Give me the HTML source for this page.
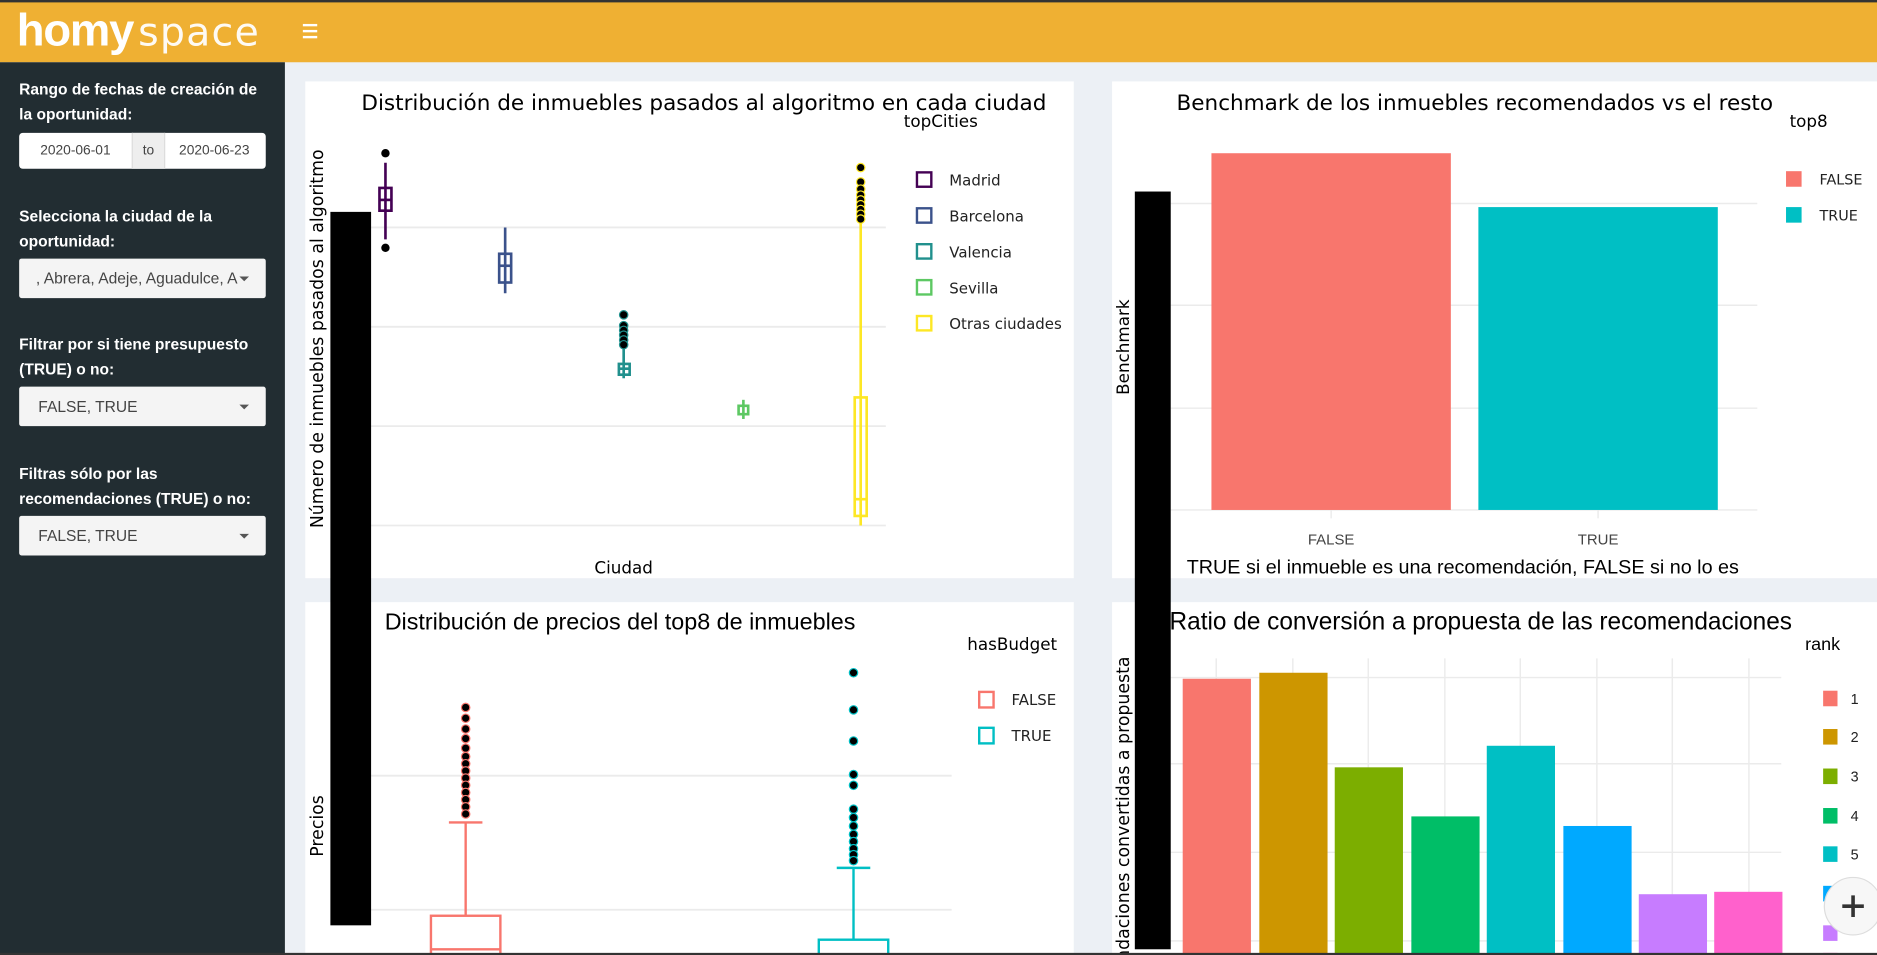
<!DOCTYPE html>
<html><head><meta charset="utf-8"><style>
html,body{margin:0;padding:0;width:1877px;height:955px;overflow:hidden;background:#ecf0f5;}
#w{position:absolute;left:0;top:0;width:1568px;height:798px;transform:scale(1.19707);transform-origin:0 0;font-family:"Liberation Sans","DejaVu Sans",sans-serif;}
#hd{position:absolute;left:0;top:0;width:1568px;height:52px;background:#efb033;border-top:2px solid #333;box-sizing:border-box;}
#logo{position:absolute;left:14px;top:4px;color:#fff;font-size:38px;line-height:40px;white-space:nowrap}
#logo b{font-weight:bold;letter-spacing:-1px}
#logo span{font-weight:normal;font-family:"DejaVu Sans","Liberation Sans",sans-serif;font-size:33px;letter-spacing:1px;margin-left:4px;-webkit-text-stroke:0;opacity:.95}
#ham{position:absolute;left:253px;top:18px;width:12px;}
#ham i{display:block;height:2px;background:#fff;margin-bottom:3px}
#sb{position:absolute;left:0;top:52px;width:238px;height:746px;background:#222d32;color:#fff;}
.lb{position:absolute;left:16px;font-weight:bold;font-size:13px;line-height:20.5px;width:205px}
.sel{position:absolute;left:16px;width:206px;height:33px;background:#f4f4f4;color:#444;font-size:13px;line-height:33px;box-sizing:border-box;padding-left:16px;border-radius:2px}
.sel:after{content:"";position:absolute;right:14px;top:15px;border:4px solid transparent;border-top:4px solid #555;border-bottom:0}
.dt{position:absolute;top:59px;left:16px;width:206px;height:30px;background:#fff;border-radius:3px;font-size:11.5px;color:#444;line-height:30px}
.dt div{position:absolute;top:0;height:30px;text-align:center}
</style></head><body><div id="w">
<div id="hd"><div id="logo"><b>homy</b><span>space</span></div><div id="ham"><i></i><i></i><i></i></div></div>
<div id="sb">
<div class="lb" style="top:13px">Rango de fechas de creación de la oportunidad:</div>
<div class="dt"><div style="left:0;width:94px">2020-06-01</div><div style="left:94px;width:26px;background:#eee;border-left:1px solid #ddd;border-right:1px solid #ddd">to</div><div style="left:120px;width:86px">2020-06-23</div></div>
<div class="lb" style="top:119px">Selecciona la ciudad de la oportunidad:</div>
<div class="sel" style="top:164px;padding-left:14px">, Abrera, Adeje, Aguadulce, A</div>
<div class="lb" style="top:226px">Filtrar por si tiene presupuesto (TRUE) o no:</div>
<div class="sel" style="top:271px">FALSE, TRUE</div>
<div class="lb" style="top:334px">Filtras sólo por las recomendaciones (TRUE) o no:</div>
<div class="sel" style="top:379px">FALSE, TRUE</div>
</div>
<svg style="position:absolute;left:0;top:0" width="1568" height="798" font-family="DejaVu Sans, Liberation Sans, sans-serif">
<rect x="255" y="68" width="642" height="415" fill="#fff"/>
<rect x="929" y="68" width="639" height="415" fill="#fff"/>
<rect x="255" y="503" width="642" height="295" fill="#fff"/>
<rect x="929" y="503" width="639" height="295" fill="#fff"/>
<!-- panel1 -->
<text x="588" y="92" font-size="18" text-anchor="middle" fill="#000">Distribución de inmuebles pasados al algoritmo en cada ciudad</text>
<g stroke="#ebebeb" stroke-width="1.5"><line x1="310" y1="190" x2="740" y2="190"/><line x1="310" y1="273" x2="740" y2="273"/><line x1="310" y1="356" x2="740" y2="356"/><line x1="310" y1="439" x2="740" y2="439"/></g>
<text transform="translate(270,283) rotate(-90)" font-size="14.5" text-anchor="middle">Número de inmuebles pasados al algoritmo</text>
<text x="521" y="479" font-size="14" text-anchor="middle">Ciudad</text>
<text x="755" y="106" font-size="14">topCities</text>
<g font-size="12.5" fill="#222"><text x="793" y="155">Madrid</text><text x="793" y="185">Barcelona</text><text x="793" y="215">Valencia</text><text x="793" y="245">Sevilla</text><text x="793" y="275">Otras ciudades</text></g>
<g fill="none" stroke-width="2"><rect x="766" y="144" width="12" height="12" stroke="#440154"/><rect x="766" y="174" width="12" height="12" stroke="#3b528b"/><rect x="766" y="204" width="12" height="12" stroke="#21908d"/><rect x="766" y="234" width="12" height="12" stroke="#5dc863"/><rect x="766" y="264" width="12" height="12" stroke="#fde725"/></g>
<g stroke="#440154" stroke-width="2.2" fill="none"><line x1="322" y1="136" x2="322" y2="200"/><rect x="317" y="157" width="10" height="19"/><line x1="317" y1="167" x2="327" y2="167"/></g>
<circle cx="322" cy="128" r="3.5" fill="#000"/><circle cx="322" cy="207" r="3.5" fill="#000"/>
<g stroke="#3b528b" stroke-width="2.2" fill="none"><line x1="422" y1="190" x2="422" y2="245"/><rect x="417" y="212" width="10" height="24"/><line x1="417" y1="222" x2="427" y2="222"/></g>
<g stroke="#21908d" stroke-width="2.2" fill="none"><line x1="521" y1="285" x2="521" y2="316"/><rect x="517" y="304" width="9" height="9"/><line x1="517" y1="308" x2="526" y2="308"/></g>
<g fill="#000" stroke="#21908d" stroke-width="1"><circle cx="521" cy="263" r="3.5"/><circle cx="521" cy="272" r="3.5"/><circle cx="521" cy="276" r="3.5"/><circle cx="521" cy="280" r="3.5"/><circle cx="521" cy="284" r="3.5"/><circle cx="521" cy="288" r="3.5"/></g>
<g stroke="#5dc863" stroke-width="2.2" fill="none"><line x1="621" y1="334" x2="621" y2="350"/><rect x="617" y="339" width="8" height="7"/></g>
<g stroke="#fde725" stroke-width="2.2" fill="none"><line x1="719" y1="185" x2="719" y2="439"/><rect x="714" y="332" width="10" height="99"/><line x1="714" y1="417" x2="724" y2="417"/></g>
<g fill="#000" stroke="#fde725" stroke-width="1"><circle cx="719" cy="140" r="3.5"/><circle cx="719" cy="152" r="3.5"/><circle cx="719" cy="158" r="3.5"/><circle cx="719" cy="163" r="3.5"/><circle cx="719" cy="167" r="3.5"/><circle cx="719" cy="171" r="3.5"/><circle cx="719" cy="175" r="3.5"/><circle cx="719" cy="179" r="3.5"/><circle cx="719" cy="183" r="3.5"/></g>
<!-- panel2 -->
<text x="1232" y="92" font-size="18" text-anchor="middle">Benchmark de los inmuebles recomendados vs el resto</text>
<g stroke="#ebebeb" stroke-width="1.2"><line x1="978" y1="170" x2="1468" y2="170"/><line x1="978" y1="255" x2="1468" y2="255"/><line x1="978" y1="341" x2="1468" y2="341"/><line x1="978" y1="426" x2="1468" y2="426"/><line x1="1112" y1="426" x2="1112" y2="433"/><line x1="1335" y1="426" x2="1335" y2="433"/></g>
<rect x="1012" y="128" width="200" height="298" fill="#f8766d"/><rect x="1235" y="173" width="200" height="253" fill="#00bfc4"/>
<g font-family="Liberation Sans, sans-serif" fill="#444" font-size="12.5" text-anchor="middle"><text x="1112" y="455">FALSE</text><text x="1335" y="455">TRUE</text></g>
<text x="1222" y="479" font-size="16.5" text-anchor="middle" font-family="Liberation Sans, sans-serif">TRUE si el inmueble es una recomendación, FALSE si no lo es</text>
<text transform="translate(943,290) rotate(-90)" font-size="14" text-anchor="middle">Benchmark</text>
<text x="1495" y="106" font-size="14">top8</text>
<rect x="1492" y="143" width="13" height="13" fill="#f8766d"/><rect x="1492" y="173" width="13" height="13" fill="#00bfc4"/>
<g font-size="12" fill="#222"><text x="1520" y="154">FALSE</text><text x="1520" y="184">TRUE</text></g>
<!-- panel3 -->
<text x="518" y="526" font-size="19.5" text-anchor="middle" font-family="Liberation Sans, sans-serif">Distribución de precios del top8 de inmuebles</text>
<g stroke="#ebebeb" stroke-width="1.5"><line x1="310" y1="648" x2="795" y2="648"/><line x1="310" y1="760" x2="795" y2="760"/></g>
<text transform="translate(270,690) rotate(-90)" font-size="14.5" text-anchor="middle">Precios</text>
<text x="808" y="543" font-size="14">hasBudget</text>
<g fill="none" stroke-width="2"><rect x="818" y="578" width="12" height="13" stroke="#f8766d"/><rect x="818" y="608" width="12" height="13" stroke="#00bfc4"/></g>
<g font-size="12.5" fill="#222"><text x="845" y="589">FALSE</text><text x="845" y="619">TRUE</text></g>
<g stroke="#f8766d" stroke-width="2" fill="none"><line x1="389" y1="687" x2="389" y2="765"/><line x1="375" y1="687" x2="403" y2="687"/><rect x="360" y="765" width="58" height="40"/><line x1="360" y1="793" x2="418" y2="793"/></g>
<g fill="#000" stroke="#f8766d" stroke-width="1"><circle cx="389" cy="591" r="3.5"/><circle cx="389" cy="600" r="3.5"/><circle cx="389" cy="609" r="3.5"/><circle cx="389" cy="617" r="3.5"/><circle cx="389" cy="625" r="3.5"/><circle cx="389" cy="632" r="3.5"/><circle cx="389" cy="638" r="3.5"/><circle cx="389" cy="644" r="3.5"/><circle cx="389" cy="650" r="3.5"/><circle cx="389" cy="656" r="3.5"/><circle cx="389" cy="662" r="3.5"/><circle cx="389" cy="668" r="3.5"/><circle cx="389" cy="674" r="3.5"/><circle cx="389" cy="680" r="3.5"/></g>
<g stroke="#00bfc4" stroke-width="2" fill="none"><line x1="713" y1="725" x2="713" y2="785"/><line x1="699" y1="725" x2="727" y2="725"/><rect x="684" y="785" width="58" height="20"/></g>
<g fill="#000" stroke="#00bfc4" stroke-width="1"><circle cx="713" cy="562" r="3.5"/><circle cx="713" cy="593" r="3.5"/><circle cx="713" cy="619" r="3.5"/><circle cx="713" cy="647" r="3.5"/><circle cx="713" cy="656" r="3.5"/><circle cx="713" cy="676" r="3.5"/><circle cx="713" cy="683" r="3.5"/><circle cx="713" cy="690" r="3.5"/><circle cx="713" cy="697" r="3.5"/><circle cx="713" cy="703" r="3.5"/><circle cx="713" cy="709" r="3.5"/><circle cx="713" cy="714" r="3.5"/><circle cx="713" cy="719" r="3.5"/></g>
<!-- panel4 -->
<text x="977" y="526" font-size="20.5" font-family="Liberation Sans, sans-serif" textLength="520" lengthAdjust="spacingAndGlyphs">Ratio de conversión a propuesta de las recomendaciones</text>
<g stroke="#ebebeb" stroke-width="1.2"><line x1="978" y1="566" x2="1488" y2="566"/><line x1="978" y1="638" x2="1488" y2="638"/><line x1="978" y1="712" x2="1488" y2="712"/><line x1="978" y1="786" x2="1488" y2="786"/>
<line x1="1016" y1="550" x2="1016" y2="798"/><line x1="1080" y1="550" x2="1080" y2="798"/><line x1="1143" y1="550" x2="1143" y2="798"/><line x1="1207" y1="550" x2="1207" y2="798"/><line x1="1270" y1="550" x2="1270" y2="798"/><line x1="1334" y1="550" x2="1334" y2="798"/><line x1="1397" y1="550" x2="1397" y2="798"/><line x1="1461" y1="550" x2="1461" y2="798"/></g>
<rect x="988" y="567" width="57" height="231" fill="#f8766d"/>
<rect x="1052" y="562" width="57" height="236" fill="#cd9600"/>
<rect x="1115" y="641" width="57" height="157" fill="#7cae00"/>
<rect x="1179" y="682" width="57" height="116" fill="#00be67"/>
<rect x="1242" y="623" width="57" height="175" fill="#00bfc4"/>
<rect x="1306" y="690" width="57" height="108" fill="#00a9ff"/>
<rect x="1369" y="747" width="57" height="51" fill="#c77cff"/>
<rect x="1432" y="745" width="57" height="53" fill="#ff61cc"/>
<text transform="translate(943,680) rotate(-90)" font-size="14.5" text-anchor="middle">endaciones convertidas a propuesta</text>
<text x="1508" y="543" font-size="15" font-family="Liberation Sans, sans-serif">rank</text>
<g><rect x="1523" y="577" width="12" height="13" fill="#f8766d"/><rect x="1523" y="609" width="12" height="13" fill="#cd9600"/><rect x="1523" y="642" width="12" height="13" fill="#7cae00"/><rect x="1523" y="675" width="12" height="13" fill="#00be67"/><rect x="1523" y="707" width="12" height="13" fill="#00bfc4"/><rect x="1523" y="740" width="12" height="13" fill="#00a9ff"/><rect x="1523" y="773" width="12" height="13" fill="#c77cff"/><rect x="1523" y="796" width="12" height="2" fill="#ff61cc"/></g>
<g font-family="Liberation Sans, sans-serif" font-size="12" fill="#222"><text x="1546" y="588">1</text><text x="1546" y="620">2</text><text x="1546" y="653">3</text><text x="1546" y="686">4</text><text x="1546" y="718">5</text><text x="1546" y="751">6</text></g>
<circle cx="1548" cy="757" r="24" fill="#f7f7f7" stroke="#ddd"/>
<path d="M1548 748v18M1539 757h18" stroke="#333" stroke-width="3"/>
<!-- black bars -->
<rect x="276" y="177" width="34" height="596" fill="#000"/>
<rect x="948" y="160" width="30" height="633" fill="#000"/>
<rect x="0" y="796" width="1568" height="2" fill="#333"/>
</svg>
</div></body></html>
